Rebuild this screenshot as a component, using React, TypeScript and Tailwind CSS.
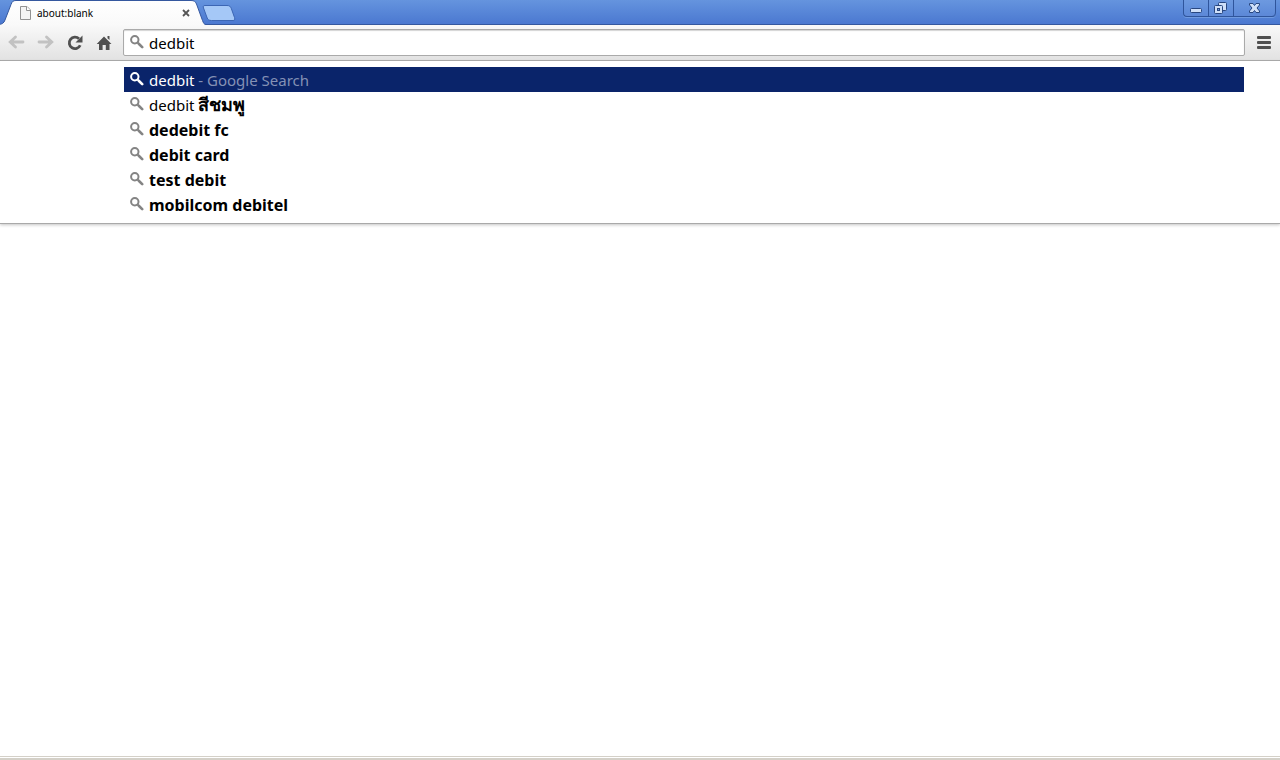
import { useState } from 'react';

type Suggestion = { typed?: string; completion?: string; thai?: string; note?: string };

const suggestions: Suggestion[] = [
  { typed: 'dedbit', note: ' - Google Search' },
  { typed: 'dedbit ', thai: 'สีชมพู' },
  { completion: 'dedebit fc' },
  { completion: 'debit card' },
  { completion: 'test debit' },
  { completion: 'mobilcom debitel' },
];

const toolButtonClass = 'flex h-7 w-[29px] items-center justify-center';
const windowButtonClass = 'flex h-4 items-center justify-center border-r border-[#2f559c]';

const SearchIcon = ({ className }: { className: string }) => (
  <svg className={className} width="14" height="14" viewBox="0 0 14 14" fill="none" stroke="currentColor" aria-hidden>
    <circle cx="4.8" cy="4.8" r="3.7" strokeWidth="2" />
    <path d="M7.500 7.500l1.500 1.500" strokeWidth="2" />
    <path d="M9 9l3.200 3.200" strokeWidth="2.600" strokeLinecap="round" />
  </svg>
);

const TabStrip = () => (
  <div className="flex h-[25px] items-start bg-linear-to-b from-[#6594de] to-[#4a77d0] shadow-[inset_0_-1px_0_#35589f]">
    <div className="relative h-[25px] w-[206px] shrink-0">
      <svg className="absolute inset-0" width="206" height="25" viewBox="0 0 206 25" aria-hidden>
        <defs>
          <linearGradient id="tabFill" x1="0" y1="0" x2="0" y2="1">
            <stop offset="0" stopColor="#ffffff" />
            <stop offset="1" stopColor="#f9f9f9" />
          </linearGradient>
        </defs>
        <path
          d="M-2 24.500C2 24.500 4 23 5 20L11 4.500C12 1.700 13 .5 16 .5H191C194 .5 195.500 1.500 196.500 4L202.500 20.500C203.500 23 204 24.500 206 24.500V26H-2Z"
          fill="url(#tabFill)"
          stroke="#35589f"
        />
      </svg>
      <div className="relative flex h-[25px] items-center pl-5 pr-3">
        <svg width="11" height="14" viewBox="0 0 11 14" fill="#f4f4f4" stroke="#929292" aria-hidden>
          <path d="M.5.5H7L10.500 4V13.500H.5Z" />
          <path d="M6.500.5V4.500H10.500" fill="#fff" />
        </svg>
        <span className="ml-1.5 flex-1 text-[10px] leading-4">about:blank</span>
        <button type="button" aria-label="Close tab" className="flex h-4 w-4 items-center justify-center">
          <svg width="8" height="8" viewBox="0 0 8 8" stroke="#555" strokeWidth="1.800" aria-hidden>
            <path d="M1 1l6 6M7 1L1 7" />
          </svg>
        </button>
      </div>
    </div>
    <button type="button" aria-label="New tab" className="-ml-1 mt-[5px]">
      <svg width="34" height="17" viewBox="0 0 34 17" aria-hidden>
        <path
          d="M3 .5H25C27.500.5 28.500 1.500 29.200 3.200L32.500 12.500C33.200 14.800 32.500 15.500 31 15.500H9.500C7 15.500 6 14.800 5.200 13L1.500 3C.8 1.200 1.500.5 3 .5Z"
          fill="#a5c8f7"
          stroke="#3c66b4"
        />
      </svg>
    </button>
    <div className="ml-auto mr-1 flex rounded-b border-b border-l border-[#2f559c] bg-white/5 shadow-[0_1px_0_#6f9ae0]">
      <button type="button" aria-label="Minimize" className={`${windowButtonClass} w-[25px]`}>
        <svg width="12" height="16" viewBox="0 0 12 16" aria-hidden>
          <rect x=".5" y="8.500" width="11" height="4" rx="1" fill="#cfdff8" stroke="#294780" />
        </svg>
      </button>
      <button type="button" aria-label="Restore" className={`${windowButtonClass} w-[25px]`}>
        <svg width="14" height="16" viewBox="0 0 14 16" fill="#cfdff8" stroke="#294780" aria-hidden>
          <rect x="4.500" y="2.500" width="8" height="8" rx="1" />
          <rect x=".5" y="5.500" width="8" height="8" rx="1" />
          <rect x="3.500" y="8.500" width="2" height="2" fill="#6f9ae0" />
        </svg>
      </button>
      <button type="button" aria-label="Close window" className={`${windowButtonClass} w-[42px] rounded-br`}>
        <svg width="12" height="16" viewBox="0 0 12 16" fill="#cfdff8" stroke="#294780" aria-hidden>
          <path d="M.5 3.500H4L5.500 5.500L7 3.500H10.500V5L8 8L10.500 11V12.500H7L5.500 10.500L4 12.500H.5V11L3 8L.5 5Z" />
        </svg>
      </button>
    </div>
  </div>
);

type ToolbarProps = { query: string; onQueryChange: (value: string) => void };

const Toolbar = ({ query, onQueryChange }: ToolbarProps) => (
  <div className="flex h-9 items-center border-b border-[#a3a3a3] bg-linear-to-b from-[#f9f9f9] to-[#e2e2e2] px-0.5">
    <button type="button" aria-label="Back" disabled className={toolButtonClass}>
      <svg width="17" height="15" viewBox="0 0 17 15" fill="none" stroke="#c2c2c2" strokeWidth="2.800" strokeLinecap="round" aria-hidden>
        <path d="M7.500 2L2.200 7L7.500 12M3 7H15" />
      </svg>
    </button>
    <button type="button" aria-label="Forward" disabled className={toolButtonClass}>
      <svg width="17" height="15" viewBox="0 0 17 15" fill="none" stroke="#c2c2c2" strokeWidth="2.800" strokeLinecap="round" aria-hidden>
        <path d="M9.500 2L14.800 7L9.500 12M14 7H2" />
      </svg>
    </button>
    <button type="button" aria-label="Reload" className={toolButtonClass}>
      <svg width="16" height="16" viewBox="0 0 16 16" fill="none" stroke="#505050" strokeWidth="2.800" aria-hidden>
        <path d="M13.200 10.200A5.700 5.700 0 1 1 12 3.800" />
        <path d="M15.500.5V7.500H8.500Z" fill="#505050" stroke="none" />
      </svg>
    </button>
    <button type="button" aria-label="Home" className={toolButtonClass}>
      <svg width="16" height="16" viewBox="0 0 16 16" fill="#505050" aria-hidden>
        <path d="M8 1.500L15.500 9H13.500V15H9.800V10H6.600V15H3V9H.7Z" />
        <path d="M11.500 1H13.500V5L11.500 3.300Z" />
      </svg>
    </button>
    <div className="ml-[5px] flex h-[27px] flex-1 items-center rounded-xs border border-[#aaa] bg-white pl-1.5 shadow-[inset_0_1px_1px_#d4d4d4]">
      <SearchIcon className="mb-px shrink-0 text-[#848484]" />
      <input
        type="text"
        aria-label="Address and search bar"
        value={query}
        onChange={(e) => onQueryChange(e.target.value)}
        className="ml-[5px] h-6 min-w-0 flex-1 bg-transparent text-[15px] leading-6 outline-none"
      />
    </div>
    <button type="button" aria-label="Menu" className={`${toolButtonClass} ml-1`}>
      <svg width="14" height="13" viewBox="0 0 14 13" fill="#505050" aria-hidden>
        <rect width="14" height="3" rx="1" />
        <rect y="5" width="14" height="3" rx="1" />
        <rect y="10" width="14" height="3" rx="1" />
      </svg>
    </button>
  </div>
);

export default function App() {
  const [query, setQuery] = useState('dedbit');
  const [selected, setSelected] = useState(0);

  return (
    <div className="flex min-h-screen flex-col bg-white font-['Noto_Sans',sans-serif] text-black">
      <TabStrip />
      <Toolbar query={query} onQueryChange={setQuery} />
      <ul className="border-b border-[#a9a9a9] py-1.5 pl-31 pr-9 shadow-[0_1px_3px_#c4c4c4]">
        {suggestions.map((item, index) => {
          const active = index === selected;
          return (
            <li key={index}>
              <button
                type="button"
                onClick={() => setSelected(index)}
                className={`flex h-[25px] w-full items-center pl-1.5 text-left text-[15px] leading-6 ${active ? 'bg-[#0a246a] text-white' : ''}`}
              >
                <SearchIcon className={`mb-px mr-[5px] shrink-0 ${active ? 'text-white' : 'text-[#848484]'}`} />
                <span className="whitespace-pre">
                  {item.typed}
                  {item.completion && <b className="text-base leading-6">{item.completion}</b>}
                  {item.thai && <b lang="th" className="text-lg leading-6">{item.thai}</b>}
                  {item.note && <span className="text-[#8491b5]">{item.note}</span>}
                </span>
              </button>
            </li>
          );
        })}
      </ul>
      <main className="flex-1" />
      <footer className="h-1 border-b-2 border-t border-[#d4d0c8]" />
    </div>
  );
}
